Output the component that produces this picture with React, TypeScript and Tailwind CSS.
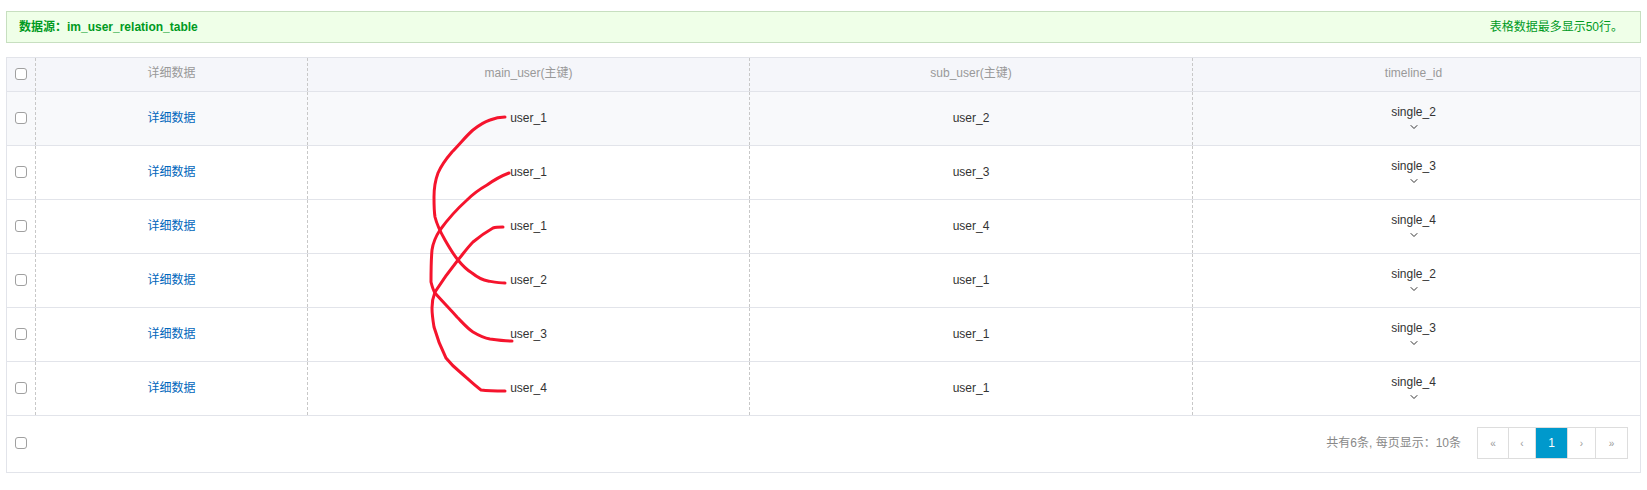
import { ChevronDown } from 'lucide-react'

const rows = [
  { main: 'user_1', sub: 'user_2', timeline: 'single_2' },
  { main: 'user_1', sub: 'user_3', timeline: 'single_3' },
  { main: 'user_1', sub: 'user_4', timeline: 'single_4' },
  { main: 'user_2', sub: 'user_1', timeline: 'single_2' },
  { main: 'user_3', sub: 'user_1', timeline: 'single_3' },
  { main: 'user_4', sub: 'user_1', timeline: 'single_4' },
]

const grid = 'grid grid-cols-[28px_272px_442px_443px_1fr]'
const dash = 'border-l border-dashed border-[#c8c8c8]'

function Checkbox() {
  return (
    <input
      type="checkbox"
      className="block appearance-none w-[12px] h-[12px] bg-white border border-[#a0a0a0] rounded-[3px]"
    />
  )
}

function PageButton({ label, active, w }: { label: string; active?: boolean; w: string }) {
  return (
    <div
      className={`${w} flex items-center justify-center border-r border-[#dddddd] last:border-r-0 ${
        active ? 'bg-[#0099cc] text-white text-[12px]' : 'text-[#999999] text-[10px]'
      }`}
    >
      {label}
    </div>
  )
}

export default function App() {
  return (
    <div className="w-[1647px] h-[490px] bg-white overflow-hidden pt-[11px] px-[6px] text-[12px] text-[#333333] font-['Liberation_Sans','Noto_Sans_CJK_SC',sans-serif]">
      {/* Banner */}
      <div className="h-[32px] flex items-center justify-between pl-[12px] pr-[17px] bg-[#efffe8] border border-[#c7dfc0] text-[#009a1f]">
        <span className="font-bold">数据源：im_user_relation_table</span>
        <span>表格数据最多显示50行。</span>
      </div>

      {/* Table */}
      <div className="relative mt-[14px] h-[416px] flex flex-col border border-[#e2e4ea]">
        <div className={`${grid} h-[34px] bg-[#f5f6fa] text-[#999999] border-b border-[#e2e4ea]`}>
          <div className="flex items-center pl-[8px] pb-[2px]">
            <Checkbox />
          </div>
          <div className={`${dash} flex items-center justify-center pb-[3px]`}>详细数据</div>
          <div className={`${dash} flex items-center justify-center pb-[3px]`}>main_user(主键)</div>
          <div className={`${dash} flex items-center justify-center pb-[3px]`}>sub_user(主键)</div>
          <div className={`${dash} flex items-center justify-center pb-[3px] pr-[6px]`}>timeline_id</div>
        </div>

        {rows.map((row, i) => (
          <div
            key={i}
            className={`${grid} h-[54px] border-b border-[#e2e4ea] ${i === 0 ? 'bg-[#f8f9fb]' : 'bg-white'}`}
          >
            <div className="flex items-center pl-[8px] pb-[2px]">
              <Checkbox />
            </div>
            <div className={`${dash} flex items-center justify-center pb-[2px] text-[#0066bb]`}>详细数据</div>
            <div className={`${dash} flex items-center justify-center pb-[2px]`}>{row.main}</div>
            <div className={`${dash} flex items-center justify-center pb-[2px]`}>{row.sub}</div>
            <div className={`${dash} flex flex-col items-center justify-center pr-[6px]`}>
              <span className="leading-[14px]">{row.timeline}</span>
              <ChevronDown className="w-[12px] h-[12px] mt-[2px]" strokeWidth={2} />
            </div>
          </div>
        ))}

        {/* Footer */}
        <div className="flex-1 flex items-center justify-between pl-[8px] pr-[8px] pb-[2px]">
          <Checkbox />
          <div className="flex items-center pr-[4px]">
            <span className="text-[#888888] mr-[16px]">共有6条, 每页显示：10条</span>
            <div className="flex h-[32px] border border-[#dddddd]">
              <PageButton label="«" w="w-[31px]" />
              <PageButton label="‹" w="w-[27px]" />
              <PageButton label="1" active w="w-[32px]" />
              <PageButton label="›" w="w-[28px]" />
              <PageButton label="»" w="w-[31px]" />
            </div>
          </div>
        </div>

        {/* Red hand-drawn annotation over the table */}
        <svg
          className="absolute left-[-7px] top-[-58px] pointer-events-none"
          width="1647"
          height="490"
          fill="none"
          stroke="#f5142d"
          strokeWidth="3"
          strokeLinecap="round"
          strokeLinejoin="round"
        >
          <path d="M505 117 C500 117 495 118 490 120 C484 122 478 126 473 130 C466 136 459 145 452 152 C446 159 441 166 438 173 C435 181 434 189 434 197 C434 204 434 211 435 217 C437 225 441 233 445 240 C449 247 453 254 458 260 C462 265 467 270 472 273 C477 277 482 280 488 281 C494 282 499 283 505 283" />
          <path d="M509 173 C501 176 494 180 487 185 C480 189 473 194 467 200 C457 209 448 219 440 230 C436 236 433 243 432 250 C431 261 431 272 431 282 C432 286 433 290 435 293 C442 301 450 309 457 317 C462 322 467 328 473 332 C478 335 484 338 490 339 C497 340 505 341 512 341" />
          <path d="M503 227 C500 227 496 227 493 228 C486 232 479 237 473 242 C468 247 463 254 458 260 C450 270 442 281 435 292 C433 297 432 302 432 308 C432 314 433 321 434 327 C437 338 441 348 446 358 C450 363 455 368 460 372 C467 378 474 385 481 390 C489 391 497 391 505 391" />
        </svg>
      </div>
    </div>
  )
}
